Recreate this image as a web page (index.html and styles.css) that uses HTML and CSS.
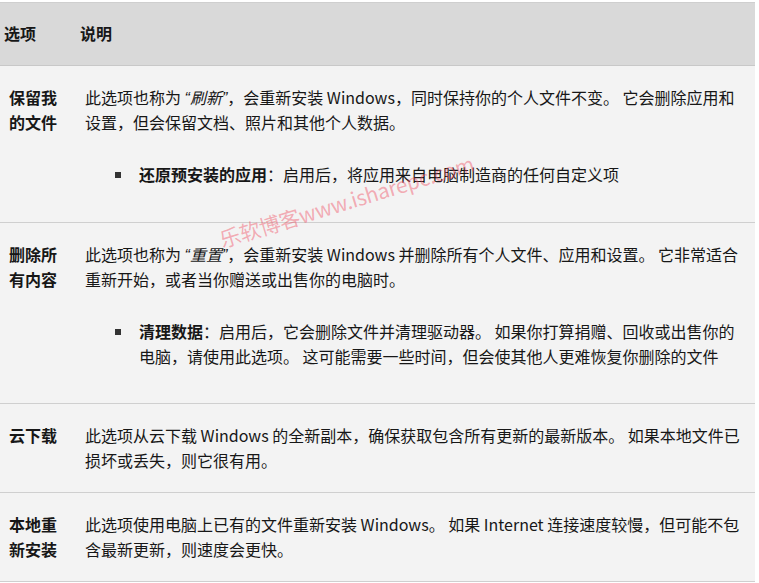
FILE: index.html
```html
<!DOCTYPE html>
<html lang="zh-CN">
<head>
<meta charset="utf-8">
<link rel="stylesheet" href="styles.css">
</head>
<body>
<div class="wrap">
<table class="opts">
  <thead>
    <tr><th class="c1">选项</th><th class="c2">说明</th></tr>
  </thead>
  <tbody>
    <tr>
      <td class="c1 name">保留我的文件</td>
      <td class="c2">
        <p>此选项也称为 <em>“刷新”</em>，会重新安装 Windows，同时保持你的个人文件不变。 它会删除应用和设置，但会保留文档、照片和其他个人数据。</p>
        <ul>
          <li><span><b>还原预安装的应用</b>：启用后，将应用来自电脑制造商的任何自定义项</span></li>
        </ul>
      </td>
    </tr>
    <tr>
      <td class="c1 name">删除所有内容</td>
      <td class="c2">
        <p>此选项也称为 <em>“重置”</em>，会重新安装 Windows 并删除所有个人文件、应用和设置。 它非常适合重新开始，或者当你赠送或出售你的电脑时。</p>
        <ul>
          <li><span><b>清理数据</b>：启用后，它会删除文件并清理驱动器。 如果你打算捐赠、回收或出售你的电脑，请使用此选项。 这可能需要一些时间，但会使其他人更难恢复你删除的文件</span></li>
        </ul>
      </td>
    </tr>
    <tr>
      <td class="c1 name">云下载</td>
      <td class="c2"><p>此选项从云下载 Windows 的全新副本，确保获取包含所有更新的最新版本。 如果本地文件已损坏或丢失，则它很有用。</p></td>
    </tr>
    <tr>
      <td class="c1 name">本地重新安装</td>
      <td class="c2"><p>此选项使用电脑上已有的文件重新安装 Windows。 如果 Internet 连接速度较慢，但可能不包含最新更新，则速度会更快。</p></td>
    </tr>
  </tbody>
</table>
<div class="wm">乐软博客www.isharepc.com</div>
</div>
</body>
</html>
```
FILE: styles.css
```css
html, body {
  margin: 0;
  padding: 0;
  background: #ffffff;
}
.wrap {
  position: relative;
  padding-top: 2px;
  width: 755px;
}
.opts {
  border-collapse: collapse;
  width: 755px;
  table-layout: fixed;
  font-family: "Noto Sans CJK SC", "Noto Sans", sans-serif;
  font-size: 16px;
  line-height: 25px;
  color: #171717;
}
.opts th {
  background: #d9d9d9;
  text-align: left;
  font-weight: bold;
  padding: 18px 4px 19px;
  border-top: 1px solid #cfcfcf;
  border-bottom: 1px solid #c8c8c8;
  vertical-align: middle;
}
.opts th.c1 { width: 68px; }
.opts td {
  background: #f3f3f3;
  vertical-align: top;
  padding: 19px 9px 19px;
  border-bottom: 1px solid #cfcfcf;
}
.opts td.c1 { width: 58px; }
.name { font-weight: bold; }
.opts p { margin: 0; }
.opts em {
  font-style: italic;
  font-family: "Liberation Sans", "Noto Sans CJK SC", sans-serif;
  line-height: 14px;
}
.opts ul {
  list-style: none;
  margin: 27px 0 15.5px;
  padding: 0 0 0 30px;
}
.opts li {
  display: flex;
  align-items: flex-start;
}
.opts li::before {
  content: "";
  flex: none;
  width: 6px;
  height: 6px;
  background: #333;
  margin-top: 10px;
  margin-right: 18px;
}
.wm {
  position: absolute;
  left: 223px;
  top: 229px;
  font-family: "Noto Sans CJK SC", sans-serif;
  font-size: 21px;
  line-height: 21px;
  letter-spacing: -0.3px;
  color: rgba(240, 70, 90, 0.42);
  transform: rotate(-17deg);
  transform-origin: left bottom;
  white-space: nowrap;
  pointer-events: none;
}
```
